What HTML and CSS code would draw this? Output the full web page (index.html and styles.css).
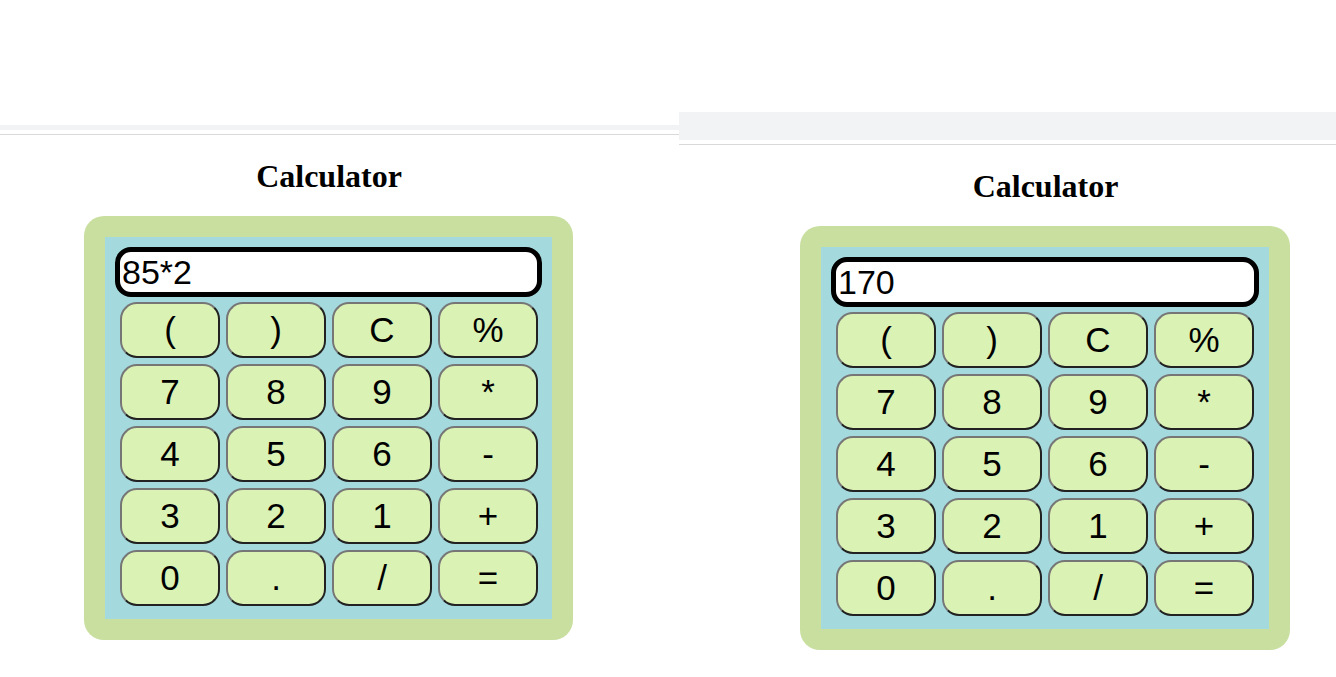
FILE: index.html
```html
<!DOCTYPE html>
<html>
<head>
<meta charset="utf-8">
<title>Calculator</title>
<link rel="stylesheet" href="styles.css">
</head>
<body>
<div class="panes">
  <section class="pane pane-left">
    <div class="top-space"></div>
    <div class="band"></div>
    <div class="gap"></div>
    <div class="rule"></div>
    <div class="content">
      <h1 class="title">Calculator</h1>
      <div class="calc">
        <div class="screen">
          <div class="display">85*2</div>
          <div class="keys">
            <div class="key">(</div><div class="key">)</div><div class="key">C</div><div class="key">%</div>
            <div class="key">7</div><div class="key">8</div><div class="key">9</div><div class="key">*</div>
            <div class="key">4</div><div class="key">5</div><div class="key">6</div><div class="key">-</div>
            <div class="key">3</div><div class="key">2</div><div class="key">1</div><div class="key">+</div>
            <div class="key">0</div><div class="key">.</div><div class="key">/</div><div class="key">=</div>
          </div>
        </div>
      </div>
    </div>
  </section>
  <section class="pane pane-right">
    <div class="top-space"></div>
    <div class="band"></div>
    <div class="gap"></div>
    <div class="rule"></div>
    <div class="content">
      <h1 class="title">Calculator</h1>
      <div class="calc">
        <div class="screen">
          <div class="display">170</div>
          <div class="keys">
            <div class="key">(</div><div class="key">)</div><div class="key">C</div><div class="key">%</div>
            <div class="key">7</div><div class="key">8</div><div class="key">9</div><div class="key">*</div>
            <div class="key">4</div><div class="key">5</div><div class="key">6</div><div class="key">-</div>
            <div class="key">3</div><div class="key">2</div><div class="key">1</div><div class="key">+</div>
            <div class="key">0</div><div class="key">.</div><div class="key">/</div><div class="key">=</div>
          </div>
        </div>
      </div>
    </div>
  </section>
</div>
</body>
</html>
```
FILE: styles.css
```css
html, body {
  margin: 0;
  padding: 0;
  background: #ffffff;
}
body {
  width: 1336px;
  height: 677px;
  overflow: hidden;
  font-family: "Liberation Sans", Arial, sans-serif;
}
.panes {
  display: flex;
  width: 1336px;
}
.pane {
  display: flex;
  flex-direction: column;
  overflow: hidden;
}
.pane-left {
  width: 679px;
  flex: none;
}
.pane-right {
  flex: 1;
}
.pane-left .top-space { height: 125px; }
.pane-left .band { height: 5px; }
.pane-right .top-space { height: 112px; }
.pane-right .band { height: 28px; }
.band { background: #f2f3f5; }
.gap { height: 4px; }
.rule { height: 1px; background: #d9d9d9; }

.pane-left .content { width: 489px; margin-left: 84px; }
.pane-right .content { width: 490px; margin-left: 121px; }

.title {
  font-family: "Liberation Serif", "Times New Roman", serif;
  font-size: 32px;
  font-weight: bold;
  text-align: center;
  margin: 23px 0 0;
  padding-left: 1px;
  height: 58px;
  line-height: 37px;
  color: #000;
}

.calc {
  background: #c9dfa0;
  border-radius: 20px;
  padding: 21px;
}
.screen {
  background: #a4dadd;
  padding: 10px 10px 13px;
}
.display {
  box-sizing: border-box;
  height: 50px;
  border: 5px solid #000;
  border-radius: 16px;
  background: #fff;
  font-size: 34px;
  line-height: 40px;
  padding: 0 2px;
  color: #000;
}
.keys {
  display: grid;
  grid-template-columns: repeat(4, 100px);
  grid-auto-rows: 56px;
  gap: 6px;
  margin-top: 5px;
  padding-left: 5px;
}
.key {
  box-sizing: border-box;
  background: #dbf2b5;
  border: 2px solid;
  border-color: #767676 #222222 #222222 #767676;
  border-radius: 17px;
  display: flex;
  align-items: center;
  justify-content: center;
  font-size: 35px;
  color: #000;
}
```
